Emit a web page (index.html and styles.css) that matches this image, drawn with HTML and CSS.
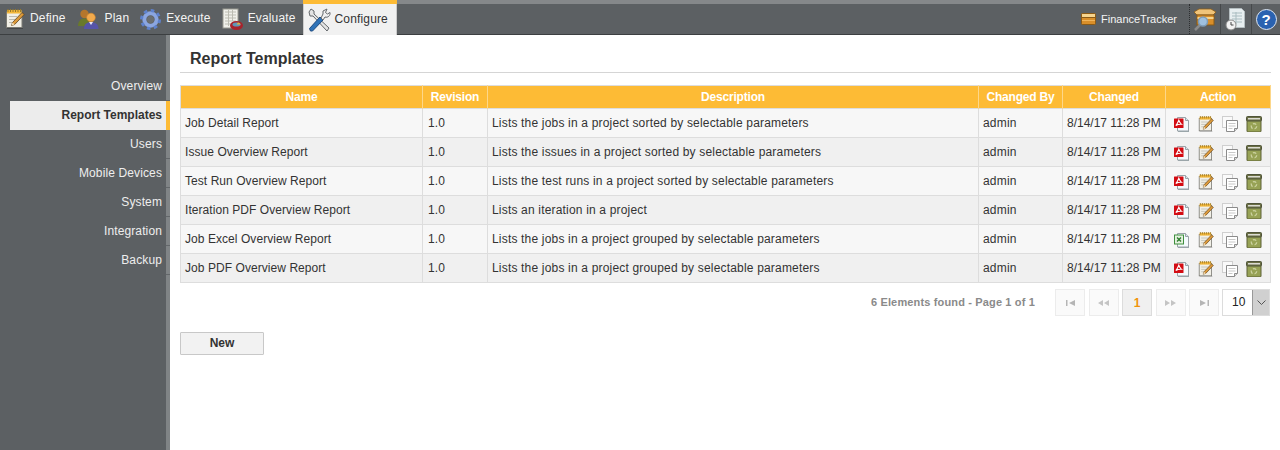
FILE: index.html
```html
<!DOCTYPE html>
<html lang="en">

<head>
  <meta charset="UTF-8">
  <title>Report Templates</title>
  <link rel="stylesheet" href="styles.css">
</head>

<body>
  <svg class="icon-defs" width="0" height="0">
    <symbol id="i-note" viewBox="0 0 20 20">
      <path d="M2 19.500h16" stroke="#00000040"/>
      <rect x="1.500" y="3" width="15.500" height="15.500" fill="#f1efe6" stroke="#7b7a74"/>
      <rect x="2" y="1" width="14.500" height="3.500" fill="#f4b83a"/>
      <path d="M3 0v3M5.500 0v3M8 0v3M10.500 0v3M13 0v3M15.500 0v3" stroke="#9a7a2a"/>
      <path d="M4 7.500h8M4 10.500h6M4 13.500h4" stroke="#bdbbb0"/>
      <path d="M6.500 16.500l1-3L17 3.500l2.200 2-9.500 10z" fill="#dd9a3a" stroke="#5e4420" stroke-width=".8"/>
      <path d="M6.500 16.500l1-3 2.200 2z" fill="#f4dfb8"/>
    </symbol>
    <symbol id="i-pdf" viewBox="0 0 16 16">
      <path d="M4 15.500h11" stroke="#9aa7ab"/>
      <path d="M3.500 1.500h8l3 3v10.500h-11z" fill="#f4fafd" stroke="#9aa3a8"/>
      <path d="M11.500 1.500v3h3" fill="#d8e4ea" stroke="#9aa3a8"/>
      <rect x="0" y="2.500" width="9.500" height="9.500" rx=".5" fill="#d30c13"/>
      <path d="M4.800 4.300c-.7 2-1.500 3.600-3 5.300 1.900-1.100 3.800-1.500 5.700-1.300-1.200-1-2.100-2.300-2.700-4z" fill="none" stroke="#fff" stroke-width="1.100"/>
    </symbol>
    <symbol id="i-xls" viewBox="0 0 16 16">
      <path d="M4 15.500h11" stroke="#9aa7ab"/>
      <path d="M3.500 1.500h8l3 3v10.500h-11z" fill="#f4fafd" stroke="#9aa3a8"/>
      <path d="M11.500 1.500v3h3" fill="#d8e4ea" stroke="#9aa3a8"/>
      <rect x=".5" y="3" width="9" height="9" fill="#e5f2e0" stroke="#3f8f3f"/>
      <path d="M3 5.500l4 4M7 5.500l-4 4" stroke="#2d7d2d" stroke-width="1.400"/>
    </symbol>
    <symbol id="i-copy" viewBox="0 0 16 16">
      <rect x=".5" y=".5" width="10" height="11" fill="#fafafa" stroke="#cfcfcf"/>
      <path d="M4.500 4.500h11v8l-3 3h-8z" fill="#fff" stroke="#8b8b8b"/>
      <path d="M12.500 15.500v-3h3" fill="#ddd" stroke="#8b8b8b"/>
      <path d="M6.500 7.500h7M6.500 10h7M6.500 12.500h4" stroke="#c8c8c8"/>
    </symbol>
    <symbol id="i-bin" viewBox="0 0 16 16">
      <rect x="1" y="4" width="14" height="12" rx="1" fill="#97a255" stroke="#5c6136"/>
      <rect x=".5" y=".5" width="15" height="4.500" rx="1" fill="#6b7045" stroke="#50543a"/>
      <rect x="2" y="2" width="12" height="1.500" fill="#dcdcd4"/>
      <circle cx="8" cy="10.300" r="2.700" fill="none" stroke="#ccd2a0" stroke-width="1.300" stroke-dasharray="3.500 2.150"/>
    </symbol>
  </svg>

  <header class="topbar">
    <nav class="modules">
      <a class="module mod-define" href="#">
        <svg class="mod-icon" width="20" height="20"><use href="#i-note"/></svg>Define
      </a>
      <a class="module mod-plan" href="#">
        <svg class="mod-icon" width="21" height="20" viewBox="0 0 21 20">
          <circle cx="6.500" cy="5" r="4.200" fill="#b5762c"/>
          <path d="M0 17c0-5 3-7.500 6.500-7.500S12 11 12 17z" fill="#69792c"/>
          <circle cx="13" cy="8.500" r="4.300" fill="#f2aa4c" stroke="#d98a2c" stroke-width=".6"/>
          <path d="M6 20c0-5 3-7 7-7s7.500 2 7.500 7z" fill="#5654a8"/>
          <path d="M11 13l2 3 2-3z" fill="#e8e8f4"/>
        </svg>Plan
      </a>
      <a class="module mod-execute" href="#">
        <svg class="mod-icon" width="21" height="21" viewBox="0 0 21 21">
          <circle cx="10.500" cy="10.500" r="6.200" fill="none" stroke="#8ba6e0" stroke-width="4"/>
          <circle cx="10.500" cy="10.500" r="9" fill="none" stroke="#5f82cc" stroke-width="3" stroke-dasharray="3.530 3.530"/>
          <circle cx="10.500" cy="10.500" r="3.500" fill="#6b6f72"/>
        </svg>Execute
      </a>
      <a class="module mod-evaluate" href="#">
        <svg class="mod-icon" width="21" height="22" viewBox="0 0 21 22">
          <rect x="1" y="1" width="15" height="19" fill="#f0f0ea" stroke="#9a9a92"/>
          <path d="M3 4h11M3 7h11M3 10h11M3 13h11M3 16h6M6.500 2v16M10.500 2v11" stroke="#bcbcb2"/>
          <ellipse cx="14.500" cy="17.500" rx="6.500" ry="4.500" fill="#a8232c"/>
          <ellipse cx="14.500" cy="16.500" rx="4" ry="2" fill="#5f96b8"/>
          <path d="M14.500 16.500h4c0-1-1-2-2.500-2z" fill="#e2b23c"/>
        </svg>Evaluate
      </a>
      <a class="module module-active" href="#">
        <svg class="mod-icon" width="23" height="24" viewBox="0 0 23 24">
          <path d="M1 4l2-3 3 2v3l15 14-2 3L5 8H2z" fill="#e4e4e4" stroke="#63676a"/>
          <path d="M1.500 20.500L12 9l3 3L4.500 23H2.500z" fill="#2f73b8" stroke="#1d4a80"/>
          <path d="M13 10l2-4 0-3 4-2-1.500 3.500 2 1.500L22 4.500c.5 3-2 5.500-5 4.500l-2 3z" fill="#f0f0f0" stroke="#63676a"/>
        </svg>Configure
      </a>
    </nav>
    <div class="tools">
      <span class="project">
        <svg class="project-icon" width="15" height="12" viewBox="0 0 15 12">
          <rect x=".5" y=".5" width="14" height="11" rx="1" fill="#d98f2a" stroke="#8a5a16"/>
          <rect x="1" y="1" width="13" height="3" fill="#f6d48e"/>
          <path d="M1 4.500h13" stroke="#8a5a16"/>
          <path d="M1 7.500h13" stroke="#f0b45a"/>
        </svg>FinanceTracker
      </span>
      <a class="tool tool-dotted" href="#">
        <svg width="24" height="24" viewBox="0 0 24 24">
          <path d="M1 5l5-3h12l5 3-3 3H4z" fill="#f0c47a" stroke="#8a5a16" stroke-width=".8"/>
          <rect x="4" y="8" width="17" height="10" fill="#d98f2a" stroke="#8a5a16"/>
          <rect x="4.500" y="10" width="16" height="2" fill="#f6d48e"/>
          <path d="M7 18l-5 5" stroke="#8b8b8b" stroke-width="2.500"/>
          <circle cx="10" cy="14.500" r="4.500" fill="#9fc0de" stroke="#7f9cb6" stroke-width="1.500"/>
        </svg>
      </a>
      <a class="tool" href="#">
        <svg width="22" height="24" viewBox="0 0 22 24">
          <path d="M4.500 1.500h12l3 3v16h-15z" fill="#e7eef0" stroke="#b5bec1"/>
          <path d="M7 6h10M7 9h10M7 12h10M7 15h10M11 5v12" stroke="#a9bcc0"/>
          <circle cx="6" cy="18" r="5" fill="#f2f2f2" stroke="#8a8a8a"/>
          <path d="M6 15v3h2.500" fill="none" stroke="#444"/>
        </svg>
      </a>
      <a class="tool tool-help" href="#"><span class="help">?</span></a>
    </div>
  </header>

  <div class="layout">
    <aside class="sidebar">
      <a class="side-item" href="#">Overview</a>
      <a class="side-item side-active" href="#">Report Templates</a>
      <a class="side-item" href="#">Users</a>
      <a class="side-item" href="#">Mobile Devices</a>
      <a class="side-item" href="#">System</a>
      <a class="side-item" href="#">Integration</a>
      <a class="side-item" href="#">Backup</a>
    </aside>

    <main class="content">
      <h1 class="page-title">Report Templates</h1>

      <table class="grid">
        <thead>
          <tr>
            <th class="col-name">Name</th>
            <th class="col-rev">Revision</th>
            <th class="col-desc">Description</th>
            <th class="col-by">Changed By</th>
            <th class="col-date">Changed</th>
            <th class="col-action">Action</th>
          </tr>
        </thead>
        <tbody>
          <tr>
            <td>Job Detail Report</td><td>1.0</td><td>Lists the jobs in a project sorted by selectable parameters</td><td>admin</td><td class="date">8/14/17 11:28 PM</td>
            <td class="actions"><svg width="16" height="16"><use href="#i-pdf"/></svg><svg width="16" height="16"><use href="#i-note"/></svg><svg width="16" height="16"><use href="#i-copy"/></svg><svg width="16" height="16"><use href="#i-bin"/></svg></td>
          </tr>
          <tr>
            <td>Issue Overview Report</td><td>1.0</td><td>Lists the issues in a project sorted by selectable parameters</td><td>admin</td><td class="date">8/14/17 11:28 PM</td>
            <td class="actions"><svg width="16" height="16"><use href="#i-pdf"/></svg><svg width="16" height="16"><use href="#i-note"/></svg><svg width="16" height="16"><use href="#i-copy"/></svg><svg width="16" height="16"><use href="#i-bin"/></svg></td>
          </tr>
          <tr>
            <td>Test Run Overview Report</td><td>1.0</td><td>Lists the test runs in a project sorted by selectable parameters</td><td>admin</td><td class="date">8/14/17 11:28 PM</td>
            <td class="actions"><svg width="16" height="16"><use href="#i-pdf"/></svg><svg width="16" height="16"><use href="#i-note"/></svg><svg width="16" height="16"><use href="#i-copy"/></svg><svg width="16" height="16"><use href="#i-bin"/></svg></td>
          </tr>
          <tr>
            <td>Iteration PDF Overview Report</td><td>1.0</td><td>Lists an iteration in a project</td><td>admin</td><td class="date">8/14/17 11:28 PM</td>
            <td class="actions"><svg width="16" height="16"><use href="#i-pdf"/></svg><svg width="16" height="16"><use href="#i-note"/></svg><svg width="16" height="16"><use href="#i-copy"/></svg><svg width="16" height="16"><use href="#i-bin"/></svg></td>
          </tr>
          <tr>
            <td>Job Excel Overview Report</td><td>1.0</td><td>Lists the jobs in a project grouped by selectable parameters</td><td>admin</td><td class="date">8/14/17 11:28 PM</td>
            <td class="actions"><svg width="16" height="16"><use href="#i-xls"/></svg><svg width="16" height="16"><use href="#i-note"/></svg><svg width="16" height="16"><use href="#i-copy"/></svg><svg width="16" height="16"><use href="#i-bin"/></svg></td>
          </tr>
          <tr>
            <td>Job PDF Overview Report</td><td>1.0</td><td>Lists the jobs in a project grouped by selectable parameters</td><td>admin</td><td class="date">8/14/17 11:28 PM</td>
            <td class="actions"><svg width="16" height="16"><use href="#i-pdf"/></svg><svg width="16" height="16"><use href="#i-note"/></svg><svg width="16" height="16"><use href="#i-copy"/></svg><svg width="16" height="16"><use href="#i-bin"/></svg></td>
          </tr>
        </tbody>
      </table>

      <div class="pager">
        <span class="pager-info">6 Elements found - Page 1 of 1</span>
        <div class="pager-buttons">
          <a class="page-btn" href="#">
            <svg width="9" height="6" viewBox="0 0 9 6"><path d="M0 0h1.500v6H0zM9 0v6L3 3z" fill="#b5b5b5"/></svg>
          </a>
          <a class="page-btn" href="#">
            <svg width="11" height="6" viewBox="0 0 11 6"><path d="M5 0v6L0 3zM11 0v6L6 3z" fill="#c4c4c4"/></svg>
          </a>
          <a class="page-btn page-current" href="#">1</a>
          <a class="page-btn" href="#">
            <svg width="11" height="6" viewBox="0 0 11 6"><path d="M0 0v6l5-3zM6 0v6l5-3z" fill="#c4c4c4"/></svg>
          </a>
          <a class="page-btn" href="#">
            <svg width="9" height="6" viewBox="0 0 9 6"><path d="M0 0v6l6-3zM7.500 0H9v6H7.500z" fill="#b5b5b5"/></svg>
          </a>
        </div>
        <div class="page-size">
          <span class="page-size-value">10</span>
          <span class="page-size-arrow">
            <svg width="9" height="5" viewBox="0 0 9 5"><path d="M.5.500l4 4 4-4" fill="none" stroke="#555"/></svg>
          </span>
        </div>
      </div>

      <button class="new-button">New</button>
    </main>
  </div>
</body>

</html>
```

FILE: styles.css
```css
body {
  margin: 0;
  height: 450px;
  overflow: hidden;
  font-family: "Liberation Sans", Arial, sans-serif;
  font-size: 12px;
  color: #333;
  background-color: #fff;
}

a {
  text-decoration: none;
  color: inherit;
}

.icon-defs {
  display: block;
  height: 0;
}

/* top bar */
.topbar {
  display: flex;
  justify-content: space-between;
  height: 30px;
  border-top: 4px solid #85888a;
  border-bottom: 1px solid #3c3f41;
  background-color: #5c6063;
  color: #f4f4f4;
}

.modules {
  display: flex;
  padding-left: 5px;
}

.module {
  display: flex;
  align-items: center;
  padding-bottom: 2px;
  margin-right: 12px;
  letter-spacing: .15px;
}

.mod-icon {
  margin: 2px 5px 0 0;
  flex-shrink: 0;
}

.mod-plan {
  margin-right: 11px;
}

.mod-execute,
.mod-evaluate {
  margin-right: 11px;
}

.mod-plan .mod-icon {
  margin-right: 6px;
}

.module-active {
  height: 29px;
  margin: -4px 0 -1px -4px;
  padding: 0 9px 2px 5px;
  border-top: 4px solid #fdbb35;
  background-color: #f1f1f1;
  color: #333;
  box-shadow: inset 1px 0 #ccc, inset -1px 0 #ccc;
}

.module-active .mod-icon {
  margin-right: 4px;
}

.tools {
  display: flex;
  align-items: center;
}

.project {
  display: flex;
  align-items: center;
  font-size: 11px;
  margin-right: 12px;
}

.project-icon {
  margin-right: 5px;
}

.tool {
  display: flex;
  align-items: center;
  justify-content: center;
  width: 30px;
  height: 30px;
  border-left: 1px solid #45484a;
}

.tool-dotted {
  border-left: 1px dotted #2c2e30;
}

.tool-help {
  width: 28px;
}

.help {
  display: block;
  width: 19px;
  height: 19px;
  line-height: 19px;
  text-align: center;
  border-radius: 50%;
  border: 1px solid #dfe8f4;
  background-color: #2a62b0;
  color: #fff;
  font-size: 15px;
  font-weight: bold;
}

/* sidebar and content */
.layout {
  display: flex;
  height: 415px;
}

.sidebar {
  width: 170px;
  padding-top: 37px;
  background: linear-gradient(to right, #5c6063 166px, #808486 166px);
  color: #eee;
}

.side-item {
  display: block;
  height: 29px;
  line-height: 29px;
  padding-right: 8px;
  text-align: right;
  letter-spacing: .12px;
  background: linear-gradient(#63676a, #63676a) right bottom / 4px 1px no-repeat;
}

.side-active {
  margin-left: 10px;
  padding-right: 4px;
  border-right: 4px solid #fdbb35;
  background: #ececec;
  color: #333;
  font-weight: bold;
  letter-spacing: 0;
}

.content {
  width: 1091px;
  padding-left: 10px;
}

.page-title {
  height: 37px;
  line-height: 47px;
  margin: 0 0 12px;
  padding-left: 10px;
  border-bottom: 1px solid #d5d5d5;
  font-size: 16px;
  color: #333;
}

/* report table */
.grid {
  width: 1091px;
  table-layout: fixed;
  border-collapse: collapse;
  border: 1px solid #dddddd;
}

.grid th {
  box-sizing: border-box;
  height: 23px;
  padding: 0;
  background-color: #fdbb35;
  color: #fff;
  font-weight: bold;
  letter-spacing: -.2px;
  border-right: 1px solid #fdd78a;
}

.grid td {
  box-sizing: border-box;
  height: 29px;
  padding: 0 0 0 4px;
  border: 1px solid #dddddd;
  white-space: nowrap;
  letter-spacing: .18px;
}

.grid td:first-child {
  letter-spacing: .06px;
}

.grid td:nth-child(2) {
  padding-left: 5px;
}

.grid tbody tr:nth-child(odd) {
  background-color: #f7f7f7;
}

.grid tbody tr:nth-child(even) {
  background-color: #f0f0f0;
}

.col-name { width: 242px; }
.col-rev { width: 65px; }
.col-desc { width: 491px; }
.col-by { width: 84px; }
.col-date { width: 103px; }

.grid .date {
  letter-spacing: 0;
}

.grid .actions {
  padding: 1px 0 0 8px;
  line-height: 0;
}

.actions svg {
  margin-right: 8px;
  vertical-align: top;
}

.actions svg:last-child {
  margin-right: 0;
}

/* pager */
.pager {
  display: flex;
  align-items: center;
  justify-content: flex-end;
  height: 27px;
  margin-top: 6px;
}

.pager-info {
  margin-right: 20px;
  padding-bottom: 2px;
  font-size: 11px;
  font-weight: bold;
  letter-spacing: .15px;
  color: #8a8a8a;
}

.pager-buttons {
  display: flex;
  gap: 3.500px;
  margin-right: 3px;
}

.page-btn {
  box-sizing: border-box;
  display: flex;
  align-items: center;
  justify-content: center;
  width: 30px;
  height: 27px;
  border: 1px solid #ececec;
  background-color: #fafafa;
}

.page-current {
  border-color: #dcdcdc;
  background-color: #f0f0f0;
  color: #f0940a;
  font-weight: bold;
}

.page-size {
  box-sizing: border-box;
  display: flex;
  width: 48px;
  height: 27px;
  margin-right: 1px;
  border: 1px solid #dcdcdc;
}

.page-size-value {
  flex: 1;
  line-height: 25px;
  padding-left: 9px;
  color: #222;
}

.page-size-arrow {
  display: flex;
  align-items: center;
  justify-content: center;
  width: 16px;
  border-left: 1px solid #999;
  background-color: #d0d0d0;
}

.new-button {
  display: block;
  width: 84px;
  height: 23px;
  margin-top: 16px;
  padding: 0 0 2px;
  border: 1px solid #c8c8c8;
  border-radius: 1px;
  background-color: #f2f2f2;
  font-family: inherit;
  font-size: 12px;
  font-weight: bold;
  color: #333;
}
```
